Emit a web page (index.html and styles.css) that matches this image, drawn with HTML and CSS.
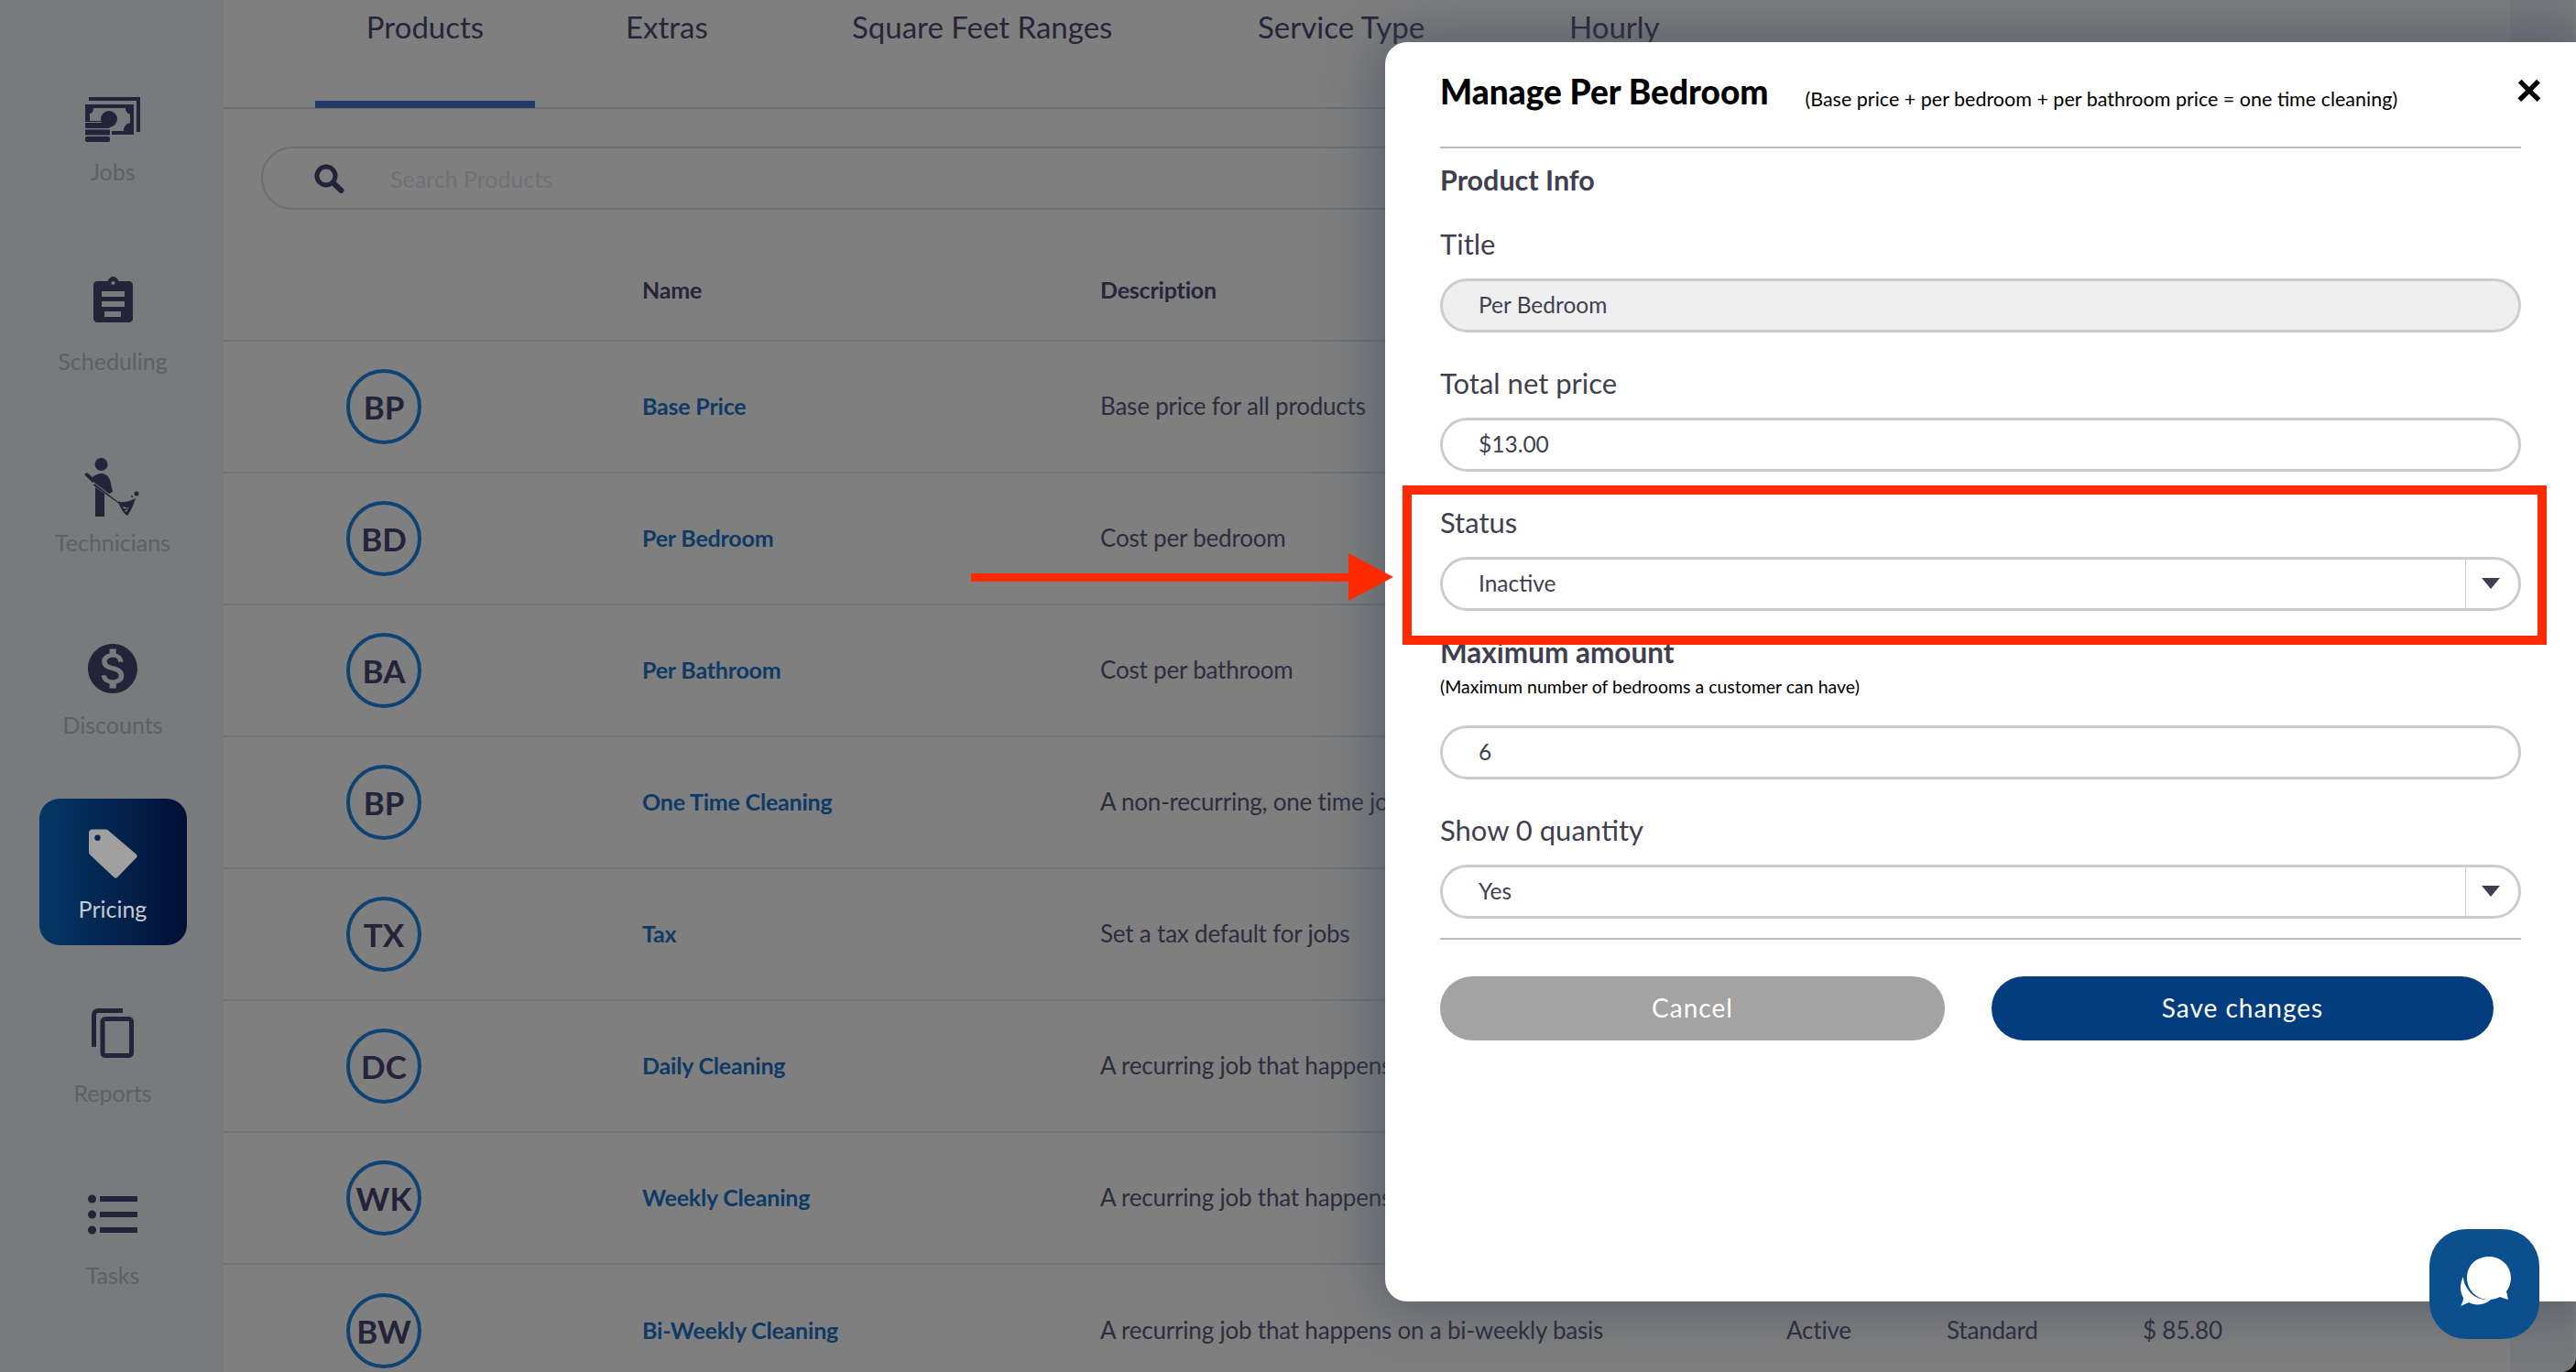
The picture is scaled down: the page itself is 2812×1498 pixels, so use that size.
FILE: index.html
```html
<!DOCTYPE html>
<html lang="en">
<head>
<meta charset="utf-8">
<title>Manage Per Bedroom</title>
<link rel="stylesheet" href="styles.css">
</head>
<body>
<div class="app">
  <nav class="sidebar">
    <a class="nav-item nav-jobs">
      <svg class="nav-icon" width="60" height="50" viewBox="0 0 60 50"><path class="ink" d="M4 0h56v38h-4V4H4z"/><path class="ink" d="M0 8h53v33H29V27H0z"/><path class="hole-dark" d="M9 12h35c0 4 2.500 6.500 5 6.500v10c-4 0-7 3-7 8.500H29V26H5v-8c2.500 0 4-2.500 4-6z"/><circle class="ink" cx="26" cy="24" r="9"/><rect class="ink" x="0" y="28" width="27" height="6" rx="1"/><rect class="ink" x="0" y="35.500" width="27" height="6" rx="1"/><rect class="ink" x="0" y="43" width="27" height="6" rx="2"/></svg>
      <span class="nav-label">Jobs</span>
    </a>
    <a class="nav-item nav-sched">
      <svg class="nav-icon" width="43" height="50" viewBox="0 0 43 50"><path class="ink" fill-rule="evenodd" d="M4 5h11.500C16.500 2 19 0 21.500 0s5 2 6 5H39c2.200 0 4 1.800 4 4v37c0 2.200-1.800 4-4 4H4c-2.200 0-4-1.800-4-4V9c0-2.200 1.800-4 4-4zm17.500 0a2 2 0 1 0 0 4 2 2 0 0 0 0-4zM9 16v6h25v-6zm0 11v6h25v-6zm3 11v6h18v-6z"/></svg>
      <span class="nav-label">Scheduling</span>
    </a>
    <a class="nav-item nav-tech">
      <svg class="nav-icon" width="63" height="64" viewBox="0 0 63 64"><circle class="ink" cx="18.500" cy="7" r="7"/><path class="ink" d="M0 18l3-2 6 5c2-2 6-4 10-4 6 0 9 5 10 11l2 9-4 2-17-13-1 1zM12 32l10 7v25H12z"/><path class="ink" d="M11 28l26 20 2-1-1 3-28-20z"/><path class="ink" d="M37 48c5 1 12 0 19-4-2 6-4 12-9 19-4-2-8-9-10-15zm6 5l-1 2c3 1 6 0 7-1l-1 0c-2 1-3 0-5-1zm1 5l2 1 2-4c-1 1-3 2-4 3z"/><circle class="ink" cx="57" cy="39" r="2.500"/><circle class="ink" cx="52" cy="42" r="1"/></svg>
      <span class="nav-label">Technicians</span>
    </a>
    <a class="nav-item nav-disc">
      <svg class="nav-icon" width="54" height="54" viewBox="2 2 20 20"><path class="ink" d="M12 2C6.480 2 2 6.480 2 12s4.480 10 10 10 10-4.480 10-10S17.520 2 12 2zm1.410 16.090V20h-2.670v-1.930c-1.710-.36-3.160-1.460-3.270-3.400h1.960c.1 1.050.82 1.870 2.650 1.870 1.960 0 2.400-.98 2.400-1.590 0-.83-.44-1.610-2.670-2.140-2.480-.6-4.180-1.620-4.180-3.670 0-1.720 1.390-2.840 3.110-3.210V4h2.670v1.950c1.860.45 2.790 1.860 2.850 3.390H14.300c-.05-1.110-.64-1.870-2.220-1.870-1.500 0-2.400.68-2.400 1.640 0 .84.65 1.390 2.670 1.910s4.180 1.390 4.180 3.910c-.01 1.830-1.380 2.830-3.120 3.160z"/></svg>
      <span class="nav-label">Discounts</span>
    </a>
    <a class="nav-item nav-price">
      <svg class="nav-icon" width="53" height="56" viewBox="0 0 53 56"><path class="tag" fill-rule="evenodd" d="M4 1.500h14c1.500 0 2.500.5 3.500 1.500l30 25.500c1.500 1.300 1.700 2.500.3 4L31.500 53.500c-1.300 1.500-2.700 1.500-4.200.2L2 30c-1.300-1.200-2-2.400-2-4V5c0-2 2-3.500 4-3.500zM9.500 7.500a3.200 3.200 0 1 0 0 6.400 3.200 3.200 0 0 0 0-6.400z"/></svg>
      <span class="nav-label">Pricing</span>
    </a>
    <a class="nav-item nav-rep">
      <svg class="nav-icon" width="46" height="54" viewBox="0 0 46 54"><path class="outline" d="M2.500 42V7c0-2.500 2-4.500 4.500-4.500h27"/><rect class="outline" x="12" y="11.500" width="31.500" height="40" rx="3"/></svg>
      <span class="nav-label">Reports</span>
    </a>
    <a class="nav-item nav-task">
      <svg class="nav-icon" width="54" height="44" viewBox="0 0 54 44"><circle class="ink" cx="4.500" cy="5" r="4.500"/><circle class="ink" cx="4.500" cy="22" r="4.500"/><circle class="ink" cx="4.500" cy="39" r="4.500"/><rect class="ink" x="13" y="2" width="41" height="6"/><rect class="ink" x="13" y="19" width="41" height="6"/><rect class="ink" x="13" y="36" width="41" height="6"/></svg>
      <span class="nav-label">Tasks</span>
    </a>
  </nav>

  <main class="main">
    <div class="tabs">
      <a class="tab tab-active tab-products">Products</a>
      <a class="tab tab-extras">Extras</a>
      <a class="tab tab-square">Square Feet Ranges</a>
      <a class="tab tab-service">Service Type</a>
      <a class="tab tab-hourly">Hourly</a>
    </div>
    <div class="search">
      <svg width="33" height="32" viewBox="0 0 33 32"><circle class="search-ring" cx="13" cy="13" r="10"/><path class="search-handle" d="M20.500 20.500l9 8.500"/></svg>
      <span class="search-text">Search Products</span>
    </div>
    <div class="table">
      <div class="row row-head">
        <span class="col-badge"></span>
        <span class="col-name">Name</span>
        <span class="col-desc">Description</span>
      </div>
      <div class="row"><span class="col-badge"><b class="badge">BP</b></span><a class="col-name link">Base Price</a><span class="col-desc">Base price for all products</span></div>
      <div class="row"><span class="col-badge"><b class="badge">BD</b></span><a class="col-name link">Per Bedroom</a><span class="col-desc">Cost per bedroom</span></div>
      <div class="row"><span class="col-badge"><b class="badge">BA</b></span><a class="col-name link">Per Bathroom</a><span class="col-desc">Cost per bathroom</span></div>
      <div class="row"><span class="col-badge"><b class="badge">BP</b></span><a class="col-name link">One Time Cleaning</a><span class="col-desc">A non-recurring, one time job</span></div>
      <div class="row"><span class="col-badge"><b class="badge">TX</b></span><a class="col-name link">Tax</a><span class="col-desc">Set a tax default for jobs</span></div>
      <div class="row"><span class="col-badge"><b class="badge">DC</b></span><a class="col-name link">Daily Cleaning</a><span class="col-desc">A recurring job that happens on a daily basis</span></div>
      <div class="row"><span class="col-badge"><b class="badge">WK</b></span><a class="col-name link">Weekly Cleaning</a><span class="col-desc">A recurring job that happens on a weekly basis</span></div>
      <div class="row row-last"><span class="col-badge"><b class="badge">BW</b></span><a class="col-name link">Bi-Weekly Cleaning</a><span class="col-desc">A recurring job that happens on a bi-weekly basis</span><span class="col-status">Active</span><span class="col-type">Standard</span><span class="col-price">$ 85.80</span></div>
    </div>
  </main>
  <div class="scroll-strip"></div>
</div>

<section class="modal">
  <header class="modal-head">
    <h2 class="modal-title">Manage Per Bedroom</h2>
    <span class="modal-sub">(Base price + per bedroom + per bathroom price = one time cleaning)</span>
    <span class="modal-close">×</span>
  </header>
  <hr class="rule">
  <h3 class="section-title">Product Info</h3>
  <div class="field field-first">
    <label class="label">Title</label>
    <div class="control control-off">Per Bedroom</div>
  </div>
  <div class="field">
    <label class="label">Total net price</label>
    <div class="control">$13.00</div>
  </div>
  <div class="field">
    <label class="label">Status</label>
    <div class="control control-select"><span class="select-value">Inactive</span><span class="select-arrow"></span></div>
  </div>
  <div class="field field-max">
    <label class="label label-strong">Maximum amount</label>
    <div class="note">(Maximum number of bedrooms a customer can have)</div>
    <div class="control">6</div>
  </div>
  <div class="field">
    <label class="label">Show 0 quantity</label>
    <div class="control control-select"><span class="select-value">Yes</span><span class="select-arrow"></span></div>
  </div>
  <hr class="rule rule-foot">
  <div class="actions">
    <button class="btn btn-cancel">Cancel</button>
    <button class="btn btn-save">Save changes</button>
  </div>
</section>

<div class="callout-box"></div>
<div class="callout-arrow"><span class="arrow-line"></span><span class="arrow-head"></span></div>

<button class="chat">
  <svg width="60" height="60" viewBox="0 0 60 60"><path class="chat-back" d="M7 22c-4 7-4 16 0 23 0 3-1 6-3 9l9-4c7 4 18 3 24-3-10 1-20-3-25-11-3-4-5-9-5-14z"/><path class="chat-front" d="M35 0c13 0 24 10 24 23 0 6-2 11-5 15l2 9-9-3c-4 2-8 3-12 3-13 0-24-10-24-24S22 0 35 0z"/></svg>
</button>
</body>
</html>
```

FILE: styles.css
```css
* { box-sizing: border-box; }
html, body { margin: 0; padding: 0; height: 1498px; overflow: hidden; background: #000; }
body { font-family: "Lato", "Liberation Sans", sans-serif; color: #26263a; }

.app { display: flex; width: 2812px; height: 1498px; background: #7f7f7f; border-bottom-right-radius: 16px; overflow: hidden; }

/* Sidebar */
.sidebar { width: 244px; flex: none; background: #797a7c; padding: 90px 0 0 2px; display: flex; flex-direction: column; align-items: center; }
.nav-item { width: 161px; height: 200px; flex: none; display: flex; flex-direction: column; align-items: center; }
.nav-icon { display: block; flex: none; }
.nav-label { font-size: 25px; line-height: 34px; color: #5a6167; white-space: nowrap; }
.ink { fill: #23233a; }
.hole-dark { fill: #797a7c; }
.outline { fill: none; stroke: #23233a; stroke-width: 5; }
.tag { fill: #a0a0a0; }

.nav-jobs { padding-top: 16px; }
.nav-jobs .nav-label { margin-top: 14px; }
.nav-sched { padding-top: 12px; }
.nav-sched .nav-label { margin-top: 25px; }
.nav-tech { padding-top: 10px; height: 199px; }
.nav-tech .nav-label { margin-top: 11px; }
.nav-disc { padding-top: 14px; height: 183px; }
.nav-disc .nav-label { margin-top: 17px; }
.nav-price { height: 160px; margin-bottom: 58px; padding-top: 32px; border-radius: 22px; background: linear-gradient(90deg, #043766, #000f35); }
.nav-price .nav-label { color: #c6cace; margin-top: 15px; }
.nav-rep { padding-top: 11px; height: 201px; }
.nav-rep .nav-label { margin-top: 21px; }
.nav-task { padding-top: 13px; }
.nav-task .nav-label { margin-top: 27px; }

/* Main */
.main { flex: 1; min-width: 0; }
.tabs { height: 119px; display: flex; border-bottom: 2px solid #6d6e72; }
.tab { display: block; height: 118px; padding-top: 7px; font-size: 33px; line-height: 44px; color: #26263a; white-space: nowrap; }
.tab-products { width: 240px; margin-left: 100px; text-align: center; }
.tab-active { border-bottom: 8px solid #1f3c68; }
.tab-extras { margin-left: 99px; width: 247px; }
.tab-square { width: 443px; }
.tab-service { width: 340px; }

.search { margin: 41px 0 0 41px; height: 69px; width: 1400px; border: 2px solid #6d6e72; border-radius: 35px; display: flex; align-items: center; padding-left: 56px; }
.search-ring { fill: none; stroke: #23233a; stroke-width: 5; }
.search-handle { fill: none; stroke: #23233a; stroke-width: 6; stroke-linecap: round; }
.search-text { margin-left: 50px; font-size: 25px; color: #707175; }

.row { display: flex; align-items: center; height: 144px; border-bottom: 2px solid #707175; font-size: 26px; letter-spacing: -.2px; color: #2d2d3e; white-space: nowrap; }
.row-head { font-weight: 700; font-size: 25px; color: #26263a; padding-top: 32px; }
.row-last { border-bottom: 0; }
.col-badge { width: 457px; flex: none; padding-left: 134px; }
.col-name { width: 500px; flex: none; padding-bottom: 3px; }
.col-desc { width: 749px; flex: none; padding-bottom: 3px; }
.row-head .col-name, .row-head .col-desc { padding-bottom: 0; }
.col-status { width: 175px; flex: none; padding-bottom: 3px; }
.col-type { width: 214px; flex: none; padding-bottom: 3px; }
.col-price { padding-bottom: 3px; }
.link { color: #0e3a66; font-weight: 700; font-size: 25px; }
.badge { display: flex; align-items: center; justify-content: center; width: 82px; height: 82px; border: 4px solid #0e4373; border-radius: 50%; font-size: 35px; letter-spacing: 0; font-weight: 700; color: #23233a; }

.scroll-strip { position: absolute; top: 0; right: 2px; bottom: 0; width: 70px; background: #77797c; border-bottom-right-radius: 16px; }

/* Modal */
.modal { position: absolute; left: 1512px; top: 46px; right: 0; bottom: 77px; background: #fff; border-radius: 24px 0 0 24px; padding: 0 60px; box-shadow: 0 0 60px 10px rgba(60, 70, 90, .55); }
.modal-head { height: 114px; display: flex; align-items: baseline; padding-top: 29px; position: relative; }
.modal-title { margin: 0; font-size: 37px; line-height: 50px; font-weight: 900; color: #000; white-space: nowrap; }
.modal-sub { margin-left: 40px; font-size: 21.500px; color: #000; white-space: nowrap; position: relative; top: 2px; }
.modal-close { position: absolute; right: -24px; top: 24px; font-size: 52px; line-height: 52px; font-weight: 900; color: #000; }
.rule { margin: 0; border: 0; height: 2px; background: #bdbdbd; }
.section-title { margin: 15px 0 2px; font-size: 30.500px; line-height: 38px; font-weight: 700; color: #3f3f50; white-space: nowrap; }
.field { margin-top: 36px; }
.field-first { margin-top: 32px; }
.field-max { margin-top: 26px; }
.label { display: block; font-size: 31px; line-height: 38px; color: #3f3f50; margin-bottom: 19px; white-space: nowrap; }
.label-strong { font-size: 31.500px; font-weight: 700; margin-bottom: 7px; }
.note { font-size: 19.500px; line-height: 24px; color: #000; margin-bottom: 30px; white-space: nowrap; }
.control { height: 59px; border: 3px solid #cdcdcd; border-radius: 30px; padding: 0 0 3px 39px; display: flex; align-items: center; font-size: 24.500px; color: #3f3f50; }
.control-off { background: #efefef; }
.control-select { padding: 0; }
.select-value { flex: 1; padding: 0 0 3px 39px; }
.select-arrow { width: 58px; height: 100%; flex: none; border-left: 1px solid #cdcdcd; position: relative; }
.select-arrow::after { content: ""; position: absolute; left: 17px; top: 20px; border: 10px solid transparent; border-top: 12px solid #3f3f50; border-bottom: 0; }
.rule-foot { margin-top: 21px; }
.actions { margin-top: 40px; display: flex; gap: 51px; }
.btn { height: 70px; border: 0; border-radius: 35px; padding: 0 0 3px; color: #fff; font-family: inherit; font-size: 28px; letter-spacing: 1px; }
.btn-cancel { width: 551px; background: #a3a3a3; }
.btn-save { width: 548px; background: #033d80; }

/* Annotation */
.callout-box { position: absolute; left: 1531px; top: 530px; width: 1249px; height: 174px; border: 10px solid #ff2a00; }
.callout-arrow { position: absolute; left: 1060px; top: 604px; display: flex; align-items: center; height: 52px; }
.arrow-line { width: 412px; height: 9px; background: #ff2a00; }
.arrow-head { border-left: 49px solid #ff2a00; border-top: 26px solid transparent; border-bottom: 26px solid transparent; }

/* Chat */
.chat { position: absolute; left: 2652px; top: 1342px; width: 120px; height: 120px; padding: 0; border: 0; border-radius: 40px; background: #0b4f8f; display: flex; align-items: center; justify-content: center; }
.chat-front, .chat-back { fill: #fff; }
```
